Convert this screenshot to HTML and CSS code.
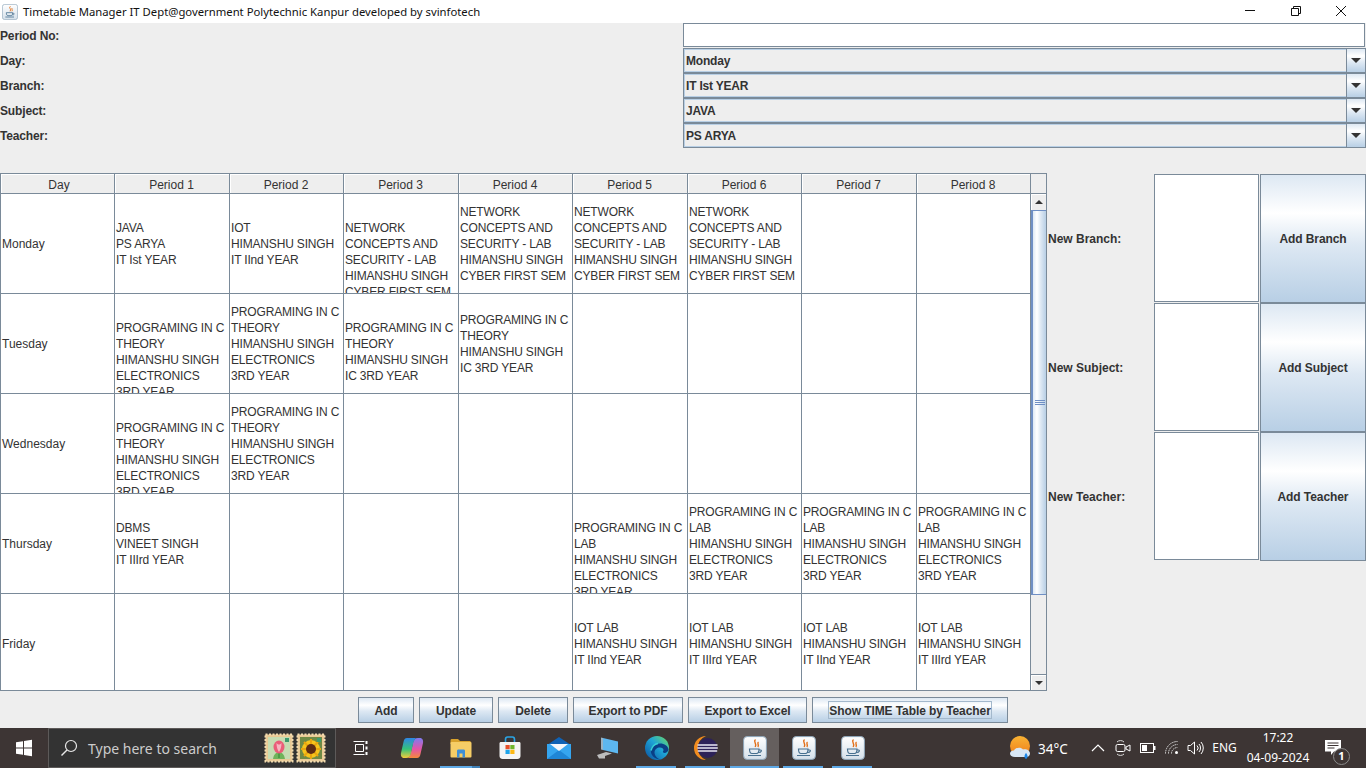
FILE: index.html
```html
<!DOCTYPE html>
<html lang="en">
<head>
<meta charset="utf-8">
<title>Timetable Manager</title>
<link rel="stylesheet" href="styles.css">
</head>
<body>
<svg class="defs" width="0" height="0" aria-hidden="true">
  <defs>
    <linearGradient id="javaBg" x1="0" y1="0" x2="0" y2="1"><stop offset="0" stop-color="#ffffff"/><stop offset="1" stop-color="#d5e0ea"/></linearGradient>
    <linearGradient id="copA" x1="0" y1="0" x2="0" y2="1"><stop offset="0" stop-color="#2f86e6"/><stop offset=".55" stop-color="#35c27a"/><stop offset="1" stop-color="#f4cc3a"/></linearGradient>
    <linearGradient id="copB" x1="0" y1="0" x2="0" y2="1"><stop offset="0" stop-color="#7d7bf0"/><stop offset=".55" stop-color="#e455a8"/><stop offset="1" stop-color="#f68a3a"/></linearGradient>
    <linearGradient id="edgeG" x1="0" y1="1" x2="1" y2="0"><stop offset="0" stop-color="#0b4f9e"/><stop offset=".55" stop-color="#1ea5d6"/><stop offset="1" stop-color="#6fdc62"/></linearGradient>
    <linearGradient id="sunG" x1="0" y1="0" x2="0" y2="1"><stop offset="0" stop-color="#f9b233"/><stop offset="1" stop-color="#ee7d1b"/></linearGradient>
    <symbol id="java" viewBox="0 0 24 24">
      <rect x=".6" y=".6" width="22.800" height="22.800" rx="3.500" fill="url(#javaBg)" stroke="#8ea6ba"/>
      <path d="M12.500 3.500c-3 2.500 2 3.500-.3 7.500M15.500 6c-2 1.500 1 2.500-.6 5" fill="none" stroke="#e2701a" stroke-width="1.400"/>
      <path d="M6.500 13h9.500c0 3-1 4.500-2.500 4.500h-4.500c-1.500 0-2.500-1.500-2.500-4.500zM16 14h1.500c1.500 0 1 2.500-1.800 2.500M5 19.500h13" fill="none" stroke="#47708f" stroke-width="1.200"/>
    </symbol>
  </defs>
</svg>

<header class="titlebar">
  <svg class="title-icon"><use href="#java"/></svg>
  <span class="title-text">Timetable Manager IT Dept@government Polytechnic Kanpur developed by svinfotech</span>
  <div class="win-controls">
    <span class="win-btn"><svg width="12" height="12" viewBox="0 0 12 12"><path d="M1 5.500h10" stroke="#111" fill="none"/></svg></span>
    <span class="win-btn"><svg width="12" height="12" viewBox="0 0 12 12"><path d="M1.500 3.500h7v7h-7zM3.500 3.500v-2h7v7h-2" stroke="#111" fill="none"/></svg></span>
    <span class="win-btn"><svg width="12" height="12" viewBox="0 0 12 12"><path d="M1 1l10 10M11 1L1 11" stroke="#111" fill="none"/></svg></span>
  </div>
</header>

<main class="app">
  <section class="form">
    <div class="form-row"><label class="lbl">Period No:</label><div class="field"></div></div>
    <div class="form-row"><label class="lbl">Day:</label><div class="combo"><span class="combo-value">Monday</span><span class="combo-arrow"><i class="tri-down"></i></span></div></div>
    <div class="form-row"><label class="lbl">Branch:</label><div class="combo"><span class="combo-value">IT Ist YEAR</span><span class="combo-arrow"><i class="tri-down"></i></span></div></div>
    <div class="form-row"><label class="lbl">Subject:</label><div class="combo"><span class="combo-value">JAVA</span><span class="combo-arrow"><i class="tri-down"></i></span></div></div>
    <div class="form-row"><label class="lbl">Teacher:</label><div class="combo"><span class="combo-value">PS ARYA</span><span class="combo-arrow"><i class="tri-down"></i></span></div></div>
  </section>

  <section class="middle">
    <div class="table-pane">
      <div class="thead">
        <div class="grid hgrid">
          <div class="th th-day">Day</div><div class="th">Period 1</div><div class="th">Period 2</div><div class="th">Period 3</div><div class="th">Period 4</div><div class="th">Period 5</div><div class="th">Period 6</div><div class="th">Period 7</div><div class="th">Period 8</div>
        </div>
        <div class="corner"></div>
      </div>
      <div class="tbody">
        <div class="grid bgrid">
          <div class="td day">Monday</div>
          <div class="td"><p>JAVA<br>PS ARYA<br>IT Ist YEAR</p></div>
          <div class="td"><p>IOT<br>HIMANSHU SINGH<br>IT IInd YEAR</p></div>
          <div class="td low"><p>NETWORK<br>CONCEPTS AND<br>SECURITY - LAB<br>HIMANSHU SINGH<br>CYBER FIRST SEM</p></div>
          <div class="td"><p>NETWORK<br>CONCEPTS AND<br>SECURITY - LAB<br>HIMANSHU SINGH<br>CYBER FIRST SEM</p></div>
          <div class="td"><p>NETWORK<br>CONCEPTS AND<br>SECURITY - LAB<br>HIMANSHU SINGH<br>CYBER FIRST SEM</p></div>
          <div class="td"><p>NETWORK<br>CONCEPTS AND<br>SECURITY - LAB<br>HIMANSHU SINGH<br>CYBER FIRST SEM</p></div>
          <div class="td"></div>
          <div class="td"></div>

          <div class="td day">Tuesday</div>
          <div class="td low"><p>PROGRAMING IN C<br>THEORY<br>HIMANSHU SINGH<br>ELECTRONICS<br>3RD YEAR</p></div>
          <div class="td"><p>PROGRAMING IN C<br>THEORY<br>HIMANSHU SINGH<br>ELECTRONICS<br>3RD YEAR</p></div>
          <div class="td low"><p>PROGRAMING IN C<br>THEORY<br>HIMANSHU SINGH<br>IC 3RD YEAR</p></div>
          <div class="td"><p>PROGRAMING IN C<br>THEORY<br>HIMANSHU SINGH<br>IC 3RD YEAR</p></div>
          <div class="td"></div><div class="td"></div><div class="td"></div><div class="td"></div>

          <div class="td day">Wednesday</div>
          <div class="td low"><p>PROGRAMING IN C<br>THEORY<br>HIMANSHU SINGH<br>ELECTRONICS<br>3RD YEAR</p></div>
          <div class="td"><p>PROGRAMING IN C<br>THEORY<br>HIMANSHU SINGH<br>ELECTRONICS<br>3RD YEAR</p></div>
          <div class="td"></div><div class="td"></div><div class="td"></div><div class="td"></div><div class="td"></div><div class="td"></div>

          <div class="td day">Thursday</div>
          <div class="td"><p>DBMS<br>VINEET SINGH<br>IT IIIrd YEAR</p></div>
          <div class="td"></div><div class="td"></div><div class="td"></div>
          <div class="td low"><p>PROGRAMING IN C<br>LAB<br>HIMANSHU SINGH<br>ELECTRONICS<br>3RD YEAR</p></div>
          <div class="td"><p>PROGRAMING IN C<br>LAB<br>HIMANSHU SINGH<br>ELECTRONICS<br>3RD YEAR</p></div>
          <div class="td"><p>PROGRAMING IN C<br>LAB<br>HIMANSHU SINGH<br>ELECTRONICS<br>3RD YEAR</p></div>
          <div class="td"><p>PROGRAMING IN C<br>LAB<br>HIMANSHU SINGH<br>ELECTRONICS<br>3RD YEAR</p></div>

          <div class="td day">Friday</div>
          <div class="td"></div><div class="td"></div><div class="td"></div><div class="td"></div>
          <div class="td"><p>IOT LAB<br>HIMANSHU SINGH<br>IT IInd YEAR</p></div>
          <div class="td"><p>IOT LAB<br>HIMANSHU SINGH<br>IT IIIrd YEAR</p></div>
          <div class="td"><p>IOT LAB<br>HIMANSHU SINGH<br>IT IInd YEAR</p></div>
          <div class="td"><p>IOT LAB<br>HIMANSHU SINGH<br>IT IIIrd YEAR</p></div>
        </div>
        <div class="scrollbar">
          <span class="sb-btn"><i class="tri-up"></i></span>
          <span class="sb-thumb"><i class="sb-grip"></i></span>
          <span class="sb-track"></span>
          <span class="sb-btn sb-btn-down"><i class="tri-down small"></i></span>
        </div>
      </div>
    </div>

    <div class="side">
      <label class="side-lbl">New Branch:</label><div class="area"></div><button class="btn big">Add Branch</button>
      <label class="side-lbl">New Subject:</label><div class="area"></div><button class="btn big">Add Subject</button>
      <label class="side-lbl">New Teacher:</label><div class="area"></div><button class="btn big">Add Teacher</button>
    </div>
  </section>

  <footer class="actions">
    <button class="btn act w-add">Add</button>
    <button class="btn act w-update">Update</button>
    <button class="btn act w-delete">Delete</button>
    <button class="btn act w-pdf">Export to PDF</button>
    <button class="btn act w-excel">Export to Excel</button>
    <button class="btn act w-show"><span class="focus">Show TIME Table by Teacher</span></button>
  </footer>
</main>

<nav class="taskbar">
  <div class="start">
    <svg width="18" height="18" viewBox="0 0 18 18"><path d="M1 3.200l7-1v6.300H1zM9 2l8-1.200v7.700H9zM1 9.500h7v6.300l-7-1zM9 9.500h8v7.700l-8-1.200z" fill="#fff"/></svg>
  </div>
  <div class="search">
    <svg class="search-icon" width="18" height="18" viewBox="0 0 18 18"><circle cx="11" cy="7" r="5.500" fill="none" stroke="#e8e8e8" stroke-width="1.200"/><path d="M7 11l-5.500 5.500" stroke="#e8e8e8" stroke-width="1.400"/></svg>
    <span class="search-text">Type here to search</span>
    <svg class="stamp" width="30" height="30" viewBox="0 0 30 30">
      <rect x="1.500" y="1.500" width="27" height="27" fill="#e9c994" stroke="#f3dcb0" stroke-width="2" stroke-dasharray="2 1.500"/>
      <rect x="4" y="4" width="22" height="22" fill="#c6dcb2"/>
      <path d="M9 26c1-6 4-7 6-6 2-1 5 0 6 6z" fill="#6fb35a"/>
      <path d="M15 25v-7" stroke="#4f9a45" stroke-width="2"/>
      <ellipse cx="15" cy="14" rx="5.500" ry="6.500" fill="#ea5d78"/>
      <path d="M12.500 10c0 4 1 7 2.500 9 1.500-2 2.500-5 2.500-9-1 1-1.800 1.500-2.500 1.500s-1.500-.5-2.500-1.500z" fill="#f7b5bf"/>
      <rect x="21" y="5" width="4" height="4" fill="#3d9a6d"/>
    </svg>
    <svg class="stamp" width="30" height="30" viewBox="0 0 30 30">
      <rect x="1.500" y="1.500" width="27" height="27" fill="#e9c994" stroke="#f3dcb0" stroke-width="2" stroke-dasharray="2 1.500"/>
      <rect x="4" y="4" width="22" height="22" fill="#6f8a45"/>
      <circle cx="15" cy="16" r="9" fill="#f6c41c"/>
      <g stroke="#e9a50f" stroke-width="2"><path d="M15 6v20M5 16h20M8 9l14 14M22 9L8 23"/></g>
      <circle cx="15" cy="16" r="5" fill="#5c2c14"/>
      <rect x="21" y="5" width="4" height="4" fill="#3d9a6d"/>
    </svg>
  </div>

  <div class="slot slot-task"><svg width="16" height="16" viewBox="0 0 16 16"><path d="M.5 1.500h11M.5 14.500h11M2.500 4.500h8v7h-8z" fill="none" stroke="#fff"/><path d="M13.500 1v3M13.500 6.500v3M13.500 12v3" stroke="#fff" stroke-width="2"/></svg></div>
  <div class="slot"><svg width="24" height="24" viewBox="0 0 24 24"><path d="M17 22H8c1.500-1.500 2.500-3.500 3-6l2-9c.5-3 2-5 5-5h2c2.500 0 3.500 2.500 3 5l-2.500 11c-.5 2.500-1.500 4-3.500 4z" fill="url(#copB)"/><path d="M7 2h9c-1.500 1.500-2.500 3.500-3 6l-2 9c-.5 3-2 5-5 5H4C1.500 22 .5 19.500 1 17L3.500 6C4 3.500 5 2 7 2z" fill="url(#copA)"/></svg></div>
  <div class="slot running split"><svg width="24" height="24" viewBox="0 0 24 24"><path d="M1.500 4.500c0-1 .5-1.500 1.500-1.500h6l2 2h10.500v3h-20z" fill="#d9a22c"/><rect x="1.500" y="6" width="21" height="15.500" rx="1" fill="#f6cd66"/><path d="M8 21.500v-6.500c0-1 .5-1.500 1.500-1.500h5c1 0 1.500.5 1.500 1.500v6.500h-2.500v-4h-3v4z" fill="#3f8fd6"/></svg></div>
  <div class="slot"><svg width="24" height="24" viewBox="0 0 24 24"><path d="M7.500 6V3.500c0-1.500 1-2.500 2-2.500h5c1 0 2 1 2 2.500V6" fill="none" stroke="#2aa4e4" stroke-width="1.600"/><path d="M1.500 7.500c0-1 .5-1.500 1.500-1.500h18c1 0 1.500.5 1.500 1.500V20c0 2-1.500 3-3 3H4.500c-1.500 0-3-1-3-3z" fill="#f4f4f4"/><rect x="7.500" y="9" width="4.200" height="4.200" fill="#e8502a"/><rect x="12.300" y="9" width="4.200" height="4.200" fill="#6fb52c"/><rect x="7.500" y="13.800" width="4.200" height="4.200" fill="#1ea4ea"/><rect x="12.300" y="13.800" width="4.200" height="4.200" fill="#fdb813"/></svg></div>
  <div class="slot"><svg width="24" height="24" viewBox="0 0 24 24"><path d="M0 9L12 1l12 8v3H0z" fill="#0f62b5"/><path d="M0 8h24v15H0z" fill="#35a5ef"/><path d="M0 23L12 14l12 9z" fill="#1f86d6"/><path d="M3 8h18l-9 7z" fill="#f3f7fb"/></svg></div>
  <div class="slot"><svg width="24" height="24" viewBox="0 0 24 24"><path d="M7 2l15 3.500v12L7 14z" fill="#5db7f0"/><path d="M5 1.500l2 .5v12l-2-.5z" fill="#9bb2c2"/><path d="M1 19l9-3 6 1.500-7 2.500v2.500H3z" fill="#bdbdbd"/></svg></div>
  <div class="slot running"><svg width="24" height="24" viewBox="0 0 24 24"><circle cx="12" cy="12" r="12" fill="url(#edgeG)"/><path d="M23.500 13.500c-.5-3.500-4-6-8.500-6-6 0-10 4-9 9 .8 4 5 7 9.500 7-3.500-1-6-4-6-7 0-3 2.500-5 5.500-5 2 0 3.500 1 3.500 2.500 0 1-1 1.500-.5 2.300 1.500 1.500 5 0 5.500-2.800z" fill="#0a3f86"/><path d="M13 7.500c-3 .5-6 3-7 7" stroke="#37d0d6" stroke-width="1.500" fill="none"/></svg></div>
  <div class="slot running"><svg width="24" height="24" viewBox="0 0 24 24"><path d="M12 0A12 12 0 0 0 12 24A13 13 0 0 1 12 0z" fill="#f28c1e"/><circle cx="13.500" cy="12" r="10" fill="#2d2258"/><path d="M3.500 9h20M3.300 12h20.500M3.800 15h19.400" stroke="#e9e7f2" stroke-width="1.400"/></svg></div>
  <div class="slot active"><svg width="24" height="24"><use href="#java"/></svg></div>
  <div class="slot running"><svg width="24" height="24"><use href="#java"/></svg></div>
  <div class="slot running"><svg width="24" height="24"><use href="#java"/></svg></div>

  <div class="tray">
    <svg class="weather" width="26" height="26" viewBox="0 0 26 26"><circle cx="12" cy="11" r="10" fill="url(#sunG)"/><path d="M7 22c-3 0-5-1.500-5-3.500s2-3.500 4-3c1-3 7-4 9-1 2-1 7 0 7 4 0 2.500-2 3.500-4 3.500z" fill="#d8e6f5"/><path d="M18 18c2 2 2 5 0 6-2-1-2-4 0-6z" fill="#1c86e8"/></svg>
    <span class="temp">34°C</span>
    <span class="tray-slot t-caret"><svg width="14" height="8" viewBox="0 0 14 8"><path d="M1 7l6-6 6 6" fill="none" stroke="#fff" stroke-width="1.200"/></svg></span>
    <span class="tray-slot t-meet"><svg width="16" height="18" viewBox="0 0 16 18"><path d="M2 3a5 5 0 0 1 7 0M2 15a5 5 0 0 0 7 0" fill="none" stroke="#ddd"/><rect x="1" y="5.500" width="9" height="7" rx="1.500" fill="none" stroke="#fff"/><path d="M11 8l4-2v6l-4-2z" fill="none" stroke="#fff"/></svg></span>
    <span class="tray-slot t-batt"><svg width="16" height="10" viewBox="0 0 16 10"><rect x=".5" y=".5" width="13" height="9" fill="none" stroke="#fff"/><rect x="2" y="2" width="5" height="6" fill="#fff"/><rect x="14" y="3" width="1.500" height="4" fill="#fff"/></svg></span>
    <span class="tray-slot t-wifi"><svg width="14" height="14" viewBox="0 0 14 14"><path d="M.5 12.500a12 12 0 0 1 12-12M3.500 12.500a9 9 0 0 1 9-9M6.500 12.500a6 6 0 0 1 6-6" fill="none" stroke="#ddd" stroke-dasharray="1.500 .7"/><circle cx="11.500" cy="11.500" r="1.500" fill="#fff"/></svg></span>
    <span class="tray-slot t-vol"><svg width="18" height="14" viewBox="0 0 18 14"><path d="M1 4.500h2.500L7.500 1v12L3.500 9.500H1z" fill="none" stroke="#fff"/><path d="M10 4.500a3.500 3.500 0 0 1 0 5M12 3a6 6 0 0 1 0 8M14 1a9 9 0 0 1 0 12" fill="none" stroke="#fff"/></svg></span>
    <span class="tray-slot t-lang">ENG</span>
    <span class="clock">17:22<br>04-09-2024</span>
    <span class="notify">
      <svg width="16" height="16" viewBox="0 0 16 16"><path d="M0 0h16v11.500H9l-3 3.500v-3.500H0z" fill="#fff"/><path d="M2.500 3h11M2.500 5.500h11M2.500 8h7" stroke="#3d3534"/></svg>
      <b class="badge">1</b>
    </span>
  </div>
</nav>
</body>
</html>
```

FILE: styles.css
```css
* { box-sizing: border-box; }
html, body { margin: 0; padding: 0; }
body {
  width: 1366px;
  height: 768px;
  overflow: hidden;
  display: flex;
  flex-direction: column;
  font: 12px/16px "Liberation Sans", Arial, sans-serif;
  color: #333;
  background: #eee;
}
.defs { position: absolute; }

/* title bar */
.titlebar {
  height: 23px;
  flex: none;
  display: flex;
  align-items: center;
  padding-left: 2px;
  background: #fff;
  color: #111;
}
.title-icon { width: 16px; height: 16px; flex: none; }
.title-text {
  margin-left: 5px;
  font: 11.3px/16px "Noto Sans", sans-serif;
}
.win-controls { margin-left: auto; display: flex; padding-right: 2px; }
.win-btn {
  width: 45.500px;
  height: 23px;
  padding-bottom: 2px;
  display: flex;
  align-items: center;
  justify-content: center;
}

/* app */
.app {
  height: 705px;
  flex: none;
  display: flex;
  flex-direction: column;
  background: #eee;
}
.form { margin-bottom: 25px; }
.form-row {
  height: 25px;
  display: grid;
  grid-template-columns: 683px 683px;
  align-items: stretch;
}
.lbl, .side-lbl { font-weight: 700; display: flex; align-items: center; }
.lbl { letter-spacing: -.15px; }
.field {
  height: 24px;
  margin-right: 1px;
  background: #fff;
  border: 1px solid #7a8a99;
}
.combo {
  display: flex;
  border: 1px solid #7a8a99;
  background: #eee;
}
.combo-value {
  flex: 1;
  display: flex;
  align-items: center;
  padding-left: 2px;
  font-weight: 700;
  letter-spacing: -.2px;
  box-shadow: inset 1px 1px 0 #b8cfe5, inset 0 -1px 0 #b8cfe5;
}
.combo-arrow {
  width: 19px;
  flex: none;
  display: flex;
  align-items: center;
  justify-content: center;
  border-left: 1px solid #7a8a99;
  background: linear-gradient(#dde8f3, #fff 30%, #dde8f3 60%, #b8cfe5);
}
.tri-down, .tri-up { display: block; width: 0; height: 0; }
.tri-down {
  border-left: 5px solid transparent;
  border-right: 5px solid transparent;
  border-top: 5px solid #333;
}
.tri-down.small { border-left-width: 4px; border-right-width: 4px; border-top-width: 4px; }
.tri-up {
  border-left: 4px solid transparent;
  border-right: 4px solid transparent;
  border-bottom: 4px solid #333;
}

/* middle */
.middle { height: 518px; display: flex; flex: none; }
.table-pane { width: 1047px; flex: none; display: flex; flex-direction: column; }
.thead { display: flex; height: 21px; flex: none; }
.tbody { display: flex; height: 497px; flex: none; }
.grid {
  width: 1031px;
  flex: none;
  display: grid;
  grid-template-columns: 114px 115px 114px 115px 114px 115px 114px 115px 114px;
  border-left: 1px solid #7a8a99;
}
.hgrid {
  border-top: 1px solid #7a8a99;
  border-bottom: 1px solid #7a8a99;
}
.th {
  display: flex;
  align-items: center;
  justify-content: center;
  padding-top: 2px;
  padding-right: 1px;
  border-right: 1px solid #7a8a99;
  box-shadow: inset 1px 1px 0 #fff;
  background: #eee;
}
.th-day { padding-right: 0; padding-left: 3px; }
.corner {
  width: 16px;
  flex: none;
  border: solid #7a8a99;
  border-width: 1px 1px 1px 0;
}
.bgrid {
  grid-auto-rows: 100px;
  align-content: start;
  overflow: hidden;
  border-bottom: 1px solid #7a8a99;
  background: #fff;
}
.td {
  display: flex;
  align-items: center;
  padding-left: 1px;
  white-space: nowrap;
  overflow: hidden;
  border-right: 1px solid #7a8a99;
  border-bottom: 1px solid #7a8a99;
}
.td p { margin: 0; letter-spacing: -.17px; }
.td.low { align-items: flex-start; padding-top: 26px; }
.scrollbar {
  width: 16px;
  flex: none;
  display: flex;
  flex-direction: column;
  border: solid #7a8a99;
  border-width: 0 1px 1px 0;
  background: #eee;
}
.sb-btn {
  height: 16px;
  flex: none;
  display: flex;
  align-items: center;
  justify-content: center;
  background: #eee;
  box-shadow: inset 1px 1px 0 #fff;
}
.sb-btn-down { border-top: 1px solid #7a8a99; }
.sb-thumb {
  height: 385px;
  flex: none;
  display: flex;
  align-items: center;
  justify-content: center;
  border: solid #6f8fc4;
  border-width: 1px 0 1px 2px;
  background: linear-gradient(90deg, #dde8f3, #fff 30%, #dde8f3 60%, #b8cfe5);
}
.sb-grip {
  display: block;
  width: 10px;
  height: 5px;
  background: repeating-linear-gradient(#6f8fc4 0 1px, transparent 1px 2px);
}
.sb-track { flex: 1; }

/* side panel */
.side {
  flex: 1;
  padding-top: 1px;
  display: grid;
  grid-template-columns: 107px 106px 106px;
  grid-auto-rows: 129px;
}
.side-lbl { padding-left: 1px; }
.area {
  margin-right: 1px;
  margin-bottom: 1px;
  background: #fff;
  border: 1px solid #7a8a99;
}
.btn {
  font: 700 12px/16px "Liberation Sans", Arial, sans-serif;
  letter-spacing: -.08px;
  color: #333;
  border: 1px solid #7a8a99;
  padding: 0;
  background: linear-gradient(#dde8f3, #fff 30%, #dde8f3 55%, #b8cfe5);
}

/* actions */
.actions {
  margin-top: 6px;
  display: flex;
  justify-content: center;
  gap: 5px;
}
.act { height: 26px; padding-top: 2px; }
.w-add { width: 56px; }
.w-update { width: 74px; }
.w-delete { width: 70px; }
.w-pdf { width: 110px; }
.w-excel { width: 119px; }
.w-show { width: 196px; padding: 0 15px; }
.focus {
  display: block;
  height: 18px;
  line-height: 18px;
  border: 1px solid #a3b8cc;
  white-space: nowrap;
}

/* taskbar */
.taskbar {
  height: 40px;
  flex: none;
  display: flex;
  background: #3d3534;
  color: #fff;
  font-family: "Noto Sans", sans-serif;
}
.start {
  width: 48px;
  display: flex;
  align-items: center;
  justify-content: center;
}
.search {
  width: 288px;
  margin-right: 2px;
  display: flex;
  align-items: center;
  background: #333;
  border: 1px solid #5d5a59;
  padding-left: 11px;
}
.search-text {
  margin-left: 10px;
  padding-top: 2px;
  width: 176px;
  font-size: 14px;
  color: #ccc;
  white-space: nowrap;
}
.stamp { flex: none; margin-right: 2px; }
.slot {
  width: 49px;
  flex: none;
  display: flex;
  align-items: center;
  justify-content: center;
  border-bottom: 2px solid transparent;
  padding-top: 2px;
}
.slot-task { padding-right: 4px; }
.slot.active { background: #655f5e; border-bottom-color: #5ea9e6; }
.slot.running { position: relative; }
.slot.running::after {
  content: "";
  position: absolute;
  left: 4px;
  right: 5px;
  bottom: -2px;
  height: 2px;
  background: #5ea9e6;
}
.slot.split::after { background: linear-gradient(90deg, #5ea9e6 80%, #3f7fb5 80%); }
.tray {
  margin-left: auto;
  width: 360px;
  display: flex;
  align-items: center;
  font-size: 12px;
}
.weather { width: 32px; flex: none; padding: 0 4px 0 2px; }
.temp { width: 47px; font-size: 13.500px; padding-top: 1px; }
.tray-slot { display: flex; align-items: center; justify-content: center; flex: none; }
.t-caret { width: 26px; }
.t-meet { width: 24px; }
.t-batt { width: 25px; }
.t-wifi { width: 24px; }
.t-vol { width: 23px; }
.t-lang { width: 35px; font-size: 12px; }
.clock { width: 72px; text-align: center; line-height: 20px; font-size: 12px; }
.notify { position: relative; width: 52px; height: 40px; display: flex; align-items: center; padding-left: 11px; }
.badge {
  position: absolute;
  left: 19px;
  top: 20px;
  width: 17px;
  height: 17px;
  border-radius: 50%;
  border: 1.500px solid #8a8a8a;
  background: #3d3534;
  font-size: 11px;
  line-height: 14px;
  text-align: center;
}
```
